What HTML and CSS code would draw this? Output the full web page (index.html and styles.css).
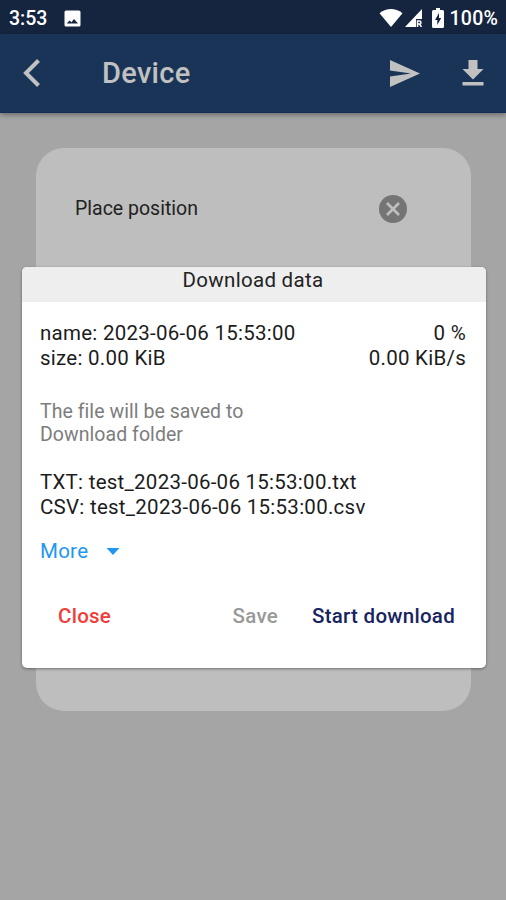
FILE: index.html
```
<!DOCTYPE html>
<html lang="en">
<head>
<meta charset="utf-8">
<title>Device</title>
<link rel="stylesheet" href="styles.css">
</head>
<body>
<div class="screen">
  <header class="statusbar">
    <span class="clock">3:53</span>
    <svg class="photo" width="17" height="17" viewBox="0 0 17 17"><rect x=".5" y=".5" width="16" height="16" rx="1.5" fill="#fff"/><path d="M2.800 13.500l2.700-3 2 1.800 2.500-3.300 4 4.500z" fill="#15243f"/></svg>
    <div class="indicators">
      <svg width="24" height="18" viewBox="0 0 24 18"><path d="M.5 4.200Q12-4 23.500 4.200L12 18z" fill="#fff"/></svg>
      <svg class="signal" width="18" height="18" viewBox="0 0 18 18"><path d="M0 18L17 0V10H11V18z" fill="#fff"/><path d="M12.500 18v-6h2a1.500 1.500 0 010 3H13m1.500 0l2 3" fill="none" stroke="#fff" stroke-width="1.500"/></svg>
      <svg class="battery" width="12" height="20" viewBox="0 0 12 20"><path d="M4 0h4v2h2.500Q12 2 12 3.500v15Q12 20 10.500 20h-9Q0 20 0 18.500v-15Q0 2 1.500 2H4z" fill="#fff"/><path d="M7 5L3 12h2.300v5L9.200 10H7z" fill="#15243f"/></svg>
      <span class="charge">100%</span>
    </div>
  </header>
  <nav class="appbar">
    <svg class="back" width="18" height="28" viewBox="0 0 18 28"><path d="M15.500 1.500L3 14l12.500 12.500" fill="none" stroke="#c1c1c1" stroke-width="4"/></svg>
    <h1 class="heading">Device</h1>
    <svg class="send" width="30" height="27" viewBox="0 0 30 27"><path d="M0 0L30 13.500 0 27V16.500L21 13.500 0 10.500z" fill="#c1c1c1"/></svg>
    <svg class="download" width="22" height="26" viewBox="0 0 22 26"><path d="M6.500 0h9v9H21.500L11 19.500.5 9h6zM.5 22h21v3.500H.5z" fill="#c1c1c1"/></svg>
  </nav>
  <main class="content">
    <section class="card">
      <div class="place">
        <span class="place-label">Place position</span>
        <svg width="28" height="28" viewBox="0 0 28 28"><circle cx="14" cy="14" r="14" fill="#757575"/><path d="M8 8l12 12M20 8L8 20" stroke="#bebebe" stroke-width="2.700"/></svg>
      </div>
    </section>
  </main>
  <div class="dialog" role="dialog">
    <h2 class="dialog-title"><span>Download data</span></h2>
    <div class="dialog-body">
      <div class="row"><span class="name">name: 2023-06-06 15:53:00</span><span>0 %</span></div>
      <div class="row"><span>size: 0.00 KiB</span><span class="rate">0.00 KiB/s</span></div>
      <p class="note">The file will be saved to<br>Download folder</p>
      <div class="row"><span class="txt">TXT: test_2023-06-06 15:53:00.txt</span></div>
      <div class="row"><span class="csv">CSV: test_2023-06-06 15:53:00.csv</span></div>
      <div class="more"><span>More</span><svg width="14" height="7" viewBox="0 0 14 7"><path d="M.5 0h13L7 7z" fill="#2196f3"/></svg></div>
    </div>
    <div class="actions">
      <span class="close">Close</span>
      <span class="save">Save</span>
      <span class="start">Start download</span>
    </div>
  </div>
</div>
</body>
</html>
```
FILE: styles.css
```
* { box-sizing: border-box; }
body { margin: 0; font-family: Roboto, "Liberation Sans", sans-serif; }
svg { display: block; flex: none; }
span { white-space: nowrap; }
.screen { position: relative; width: 506px; height: 900px; overflow: hidden; background: #a5a5a5; }
.statusbar { height: 34px; background: #15243f; display: flex; align-items: center; padding: 2px 8px 0 9px; color: #fff; font-size: 19.500px; font-weight: 500; }
.clock { width: 39px; }
.photo { margin-left: 16px; }
.indicators { display: flex; align-items: center; margin-left: auto; }
.signal { margin-left: 2px; }
.battery { margin-left: 9px; }
.charge { margin-left: 6px; letter-spacing: .2px; }
.appbar { position: relative; height: 79px; background: #1a3457; display: flex; align-items: center; padding: 0 22px 0 23px; border-bottom: 1px solid #142a57; box-shadow: 0 2px 5px rgba(0,0,0,.35); }
.heading { margin: 0 0 0 61px; color: #c1c1c1; font-size: 29px; font-weight: 500; line-height: 34px; letter-spacing: .3px; }
.send { margin-left: auto; }
.download { margin-left: 42px; }
.content { padding: 35px 35px 0 36px; }
.card { height: 563px; border-radius: 28px; background: #bebebe; padding: 47px 64px 0 39px; }
.place { display: flex; align-items: center; justify-content: space-between; }
.place-label { color: #222; font-size: 19.500px; letter-spacing: 0; line-height: 28px; margin-top: -1px; }
.dialog { position: absolute; left: 22px; top: 267px; width: 464px; height: 401px; border-radius: 5px; background: #fff; overflow: hidden; box-shadow: 0 1px 3px rgba(0,0,0,.4); }
.dialog-title { margin: 0; padding-right: 2px; height: 35px; background: #eee; color: #222; text-align: center; font-size: 20.500px; font-weight: 400; line-height: 26px; letter-spacing: .3px; }
.dialog-body { padding: 19px 20px 0 18px; color: #1c1c1c; font-size: 20.500px; letter-spacing: .26px; }
.row { display: flex; justify-content: space-between; line-height: 25px; }
.note { margin: 29px 0 24px; color: #7d7d7d; font-size: 19.500px; line-height: 23px; letter-spacing: .05px; }
.more { display: flex; align-items: center; gap: 18px; margin-top: 18px; line-height: 26px; color: #2196f3; }
.actions { display: flex; align-items: center; margin-top: 40px; padding: 0 31px 0 36px; font-size: 20.500px; font-weight: 500; line-height: 24px; letter-spacing: .27px; }
.close { color: #f13c38; }
.save { margin-left: auto; color: #999; }
.start { margin-left: 34px; color: #17245f; }
```
